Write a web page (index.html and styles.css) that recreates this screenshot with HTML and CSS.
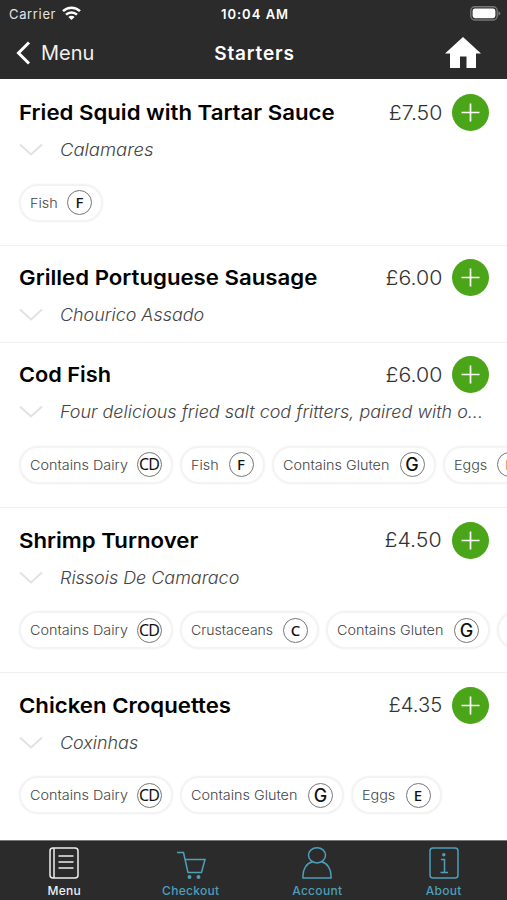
FILE: index.html
```html
<!DOCTYPE html>
<html lang="en">
<head>
<meta charset="utf-8">
<title>Starters</title>
<link rel="stylesheet" href="styles.css">
</head>
<body>
<svg class="defs" aria-hidden="true">
  <symbol id="plus" viewBox="0 0 37 37"><path d="M18.5 9.5v18M9.5 18.5h18" fill="none" stroke="#fff" stroke-width="1.7"/></symbol>
  <symbol id="chev" viewBox="0 0 24 14"><path d="M1 1.5 12 11.5 23 1.5" fill="none" stroke="#e2e2e2" stroke-width="2"/></symbol>
</svg>
<div class="app">
  <header>
    <div class="status">
      <div class="carrier"><span>Carrier</span>
        <svg width="19" height="15" viewBox="0 0 19 15" fill="none" stroke="#fff" stroke-width="2.5"><path d="M1 5.2a12.2 12.2 0 0 1 17 0M4 8.7a7.9 7.9 0 0 1 11 0"/><path d="M9.500 14 6.400 11a4.400 4.400 0 0 1 6.200 0z" fill="#fff" stroke="none"/></svg>
      </div>
      <div class="clock">10:04 AM</div>
      <svg class="battery" width="31" height="15" viewBox="0 0 31 15"><rect x=".8" y=".8" width="26.4" height="13.2" rx="4" fill="none" stroke="#777" stroke-width="1.4"/><rect x="2.6" y="2.6" width="22.8" height="9.6" rx="2.4" fill="#fff"/><path d="M28.4 5.2q2 .7 2 2.2t-2 2.2z" fill="#777"/></svg>
    </div>
    <div class="nav">
      <div class="back"><svg width="15" height="24" viewBox="0 0 15 24"><path d="M13 1.5 2.5 12 13 22.5" fill="none" stroke="#fff" stroke-width="3"/></svg><span>Menu</span></div>
      <h1>Starters</h1>
      <svg class="home" width="36" height="31" viewBox="0 0 36 31"><path d="M18 0 36 16.4H31V31H21.500V19.500H15V31H5V16.400H0z" fill="#fff"/></svg>
    </div>
  </header>
  <main>
    <section class="item">
      <div class="top"><h2>Fried Squid with Tartar Sauce</h2><span class="price">£7.50</span><svg class="add"><use href="#plus"/></svg></div>
      <div class="sub"><svg><use href="#chev"/></svg><i class="wide">Calamares</i></div>
      <div class="chips"><div class="chip fish"><span>Fish</span><b>F</b></div></div>
    </section>
    <section class="item short">
      <div class="top"><h2>Grilled Portuguese Sausage</h2><span class="price">£6.00</span><svg class="add"><use href="#plus"/></svg></div>
      <div class="sub"><svg><use href="#chev"/></svg><i>Chourico Assado</i></div>
    </section>
    <section class="item">
      <div class="top"><h2 class="cod">Cod Fish</h2><span class="price">£6.00</span><svg class="add"><use href="#plus"/></svg></div>
      <div class="sub"><svg><use href="#chev"/></svg><i>Four delicious fried salt cod fritters, paired with o...</i></div>
      <div class="chips"><div class="chip dairy"><span>Contains Dairy</span><b class="duo">CD</b></div><div class="chip fish"><span>Fish</span><b>F</b></div><div class="chip gluten"><span>Contains Gluten</span><b class="bold">G</b></div><div class="chip eggs"><span>Eggs</span><b>E</b></div></div>
    </section>
    <section class="item">
      <div class="top"><h2>Shrimp Turnover</h2><span class="price">£4.50</span><svg class="add"><use href="#plus"/></svg></div>
      <div class="sub"><svg><use href="#chev"/></svg><i>Rissois De Camaraco</i></div>
      <div class="chips"><div class="chip dairy"><span>Contains Dairy</span><b class="duo">CD</b></div><div class="chip crust"><span>Crustaceans</span><b>C</b></div><div class="chip gluten"><span>Contains Gluten</span><b class="bold">G</b></div><div class="chip eggs"></div></div>
    </section>
    <section class="item">
      <div class="top"><h2>Chicken Croquettes</h2><span class="price narrow">£4.35</span><svg class="add"><use href="#plus"/></svg></div>
      <div class="sub"><svg><use href="#chev"/></svg><i>Coxinhas</i></div>
      <div class="chips"><div class="chip dairy"><span>Contains Dairy</span><b class="duo">CD</b></div><div class="chip gluten"><span>Contains Gluten</span><b class="bold">G</b></div><div class="chip eggs"><span>Eggs</span><b>E</b></div></div>
    </section>
  </main>
  <footer>
    <div class="tab active"><svg viewBox="0 0 32 34"><rect x="2" y="2" width="28" height="30" rx="3"/><path d="M6 2v30M10.500 10h15M10.500 16h15M10.500 22h15"/></svg><span>Menu</span></div>
    <div class="tab"><svg viewBox="0 0 32 34"><path d="M2 6.500h6.500l4.500 20h13.500l3.500-13H10"/><circle cx="14.500" cy="31" r="1.200" fill="currentColor"/><circle cx="23.500" cy="31" r="1.200" fill="currentColor"/></svg><span>Checkout</span></div>
    <div class="tab"><svg viewBox="0 0 32 34"><ellipse cx="16" cy="9.300" rx="8.500" ry="7.600"/><path d="M11.500 15.800C5 17.500 2 23.500 2 29.500V32H30V29.500C30 23.500 27 17.500 20.500 15.800"/></svg><span>Account</span></div>
    <div class="tab"><svg viewBox="0 0 32 34"><rect x="2" y="2" width="28" height="30" rx="3"/><path d="M13 13.500h3.500V26M12.500 26.500h7.500"/><circle cx="15.800" cy="8.700" r="1" fill="currentColor"/></svg><span>About</span></div>
  </footer>
</div>
</body>
</html>
```
FILE: styles.css
```css
* { box-sizing: border-box; }
body { margin: 0; font-family: Inter, "Liberation Sans", sans-serif; background: #fff; }
.defs { position: absolute; width: 0; height: 0; }
.app { width: 507px; height: 900px; overflow: hidden; display: flex; flex-direction: column; }
header { height: 79px; background: #2b2b2b; color: #fff; flex: none; }
.status { height: 28px; display: grid; grid-template-columns: 1fr auto 1fr; align-items: center; padding: 0 6px 0 9px; font-size: 13px; }
.carrier { display: flex; align-items: center; gap: 6px; color: #e4e4e4; letter-spacing: .65px; }
.carrier svg { margin-top: -2px; }
.clock { font-weight: 600; letter-spacing: 1px; }
.battery { justify-self: end; margin-top: -1px; }
.nav { height: 49px; display: grid; grid-template-columns: 1fr auto 1fr; align-items: center; padding: 0 26px 0 16px; }
.back { display: flex; align-items: center; gap: 10px; font-size: 20px; color: #f0f0f0; }
h1 { margin: 2px 0 0; font-size: 19px; font-weight: 600; letter-spacing: .85px; transform: translateX(6px); }
.home { justify-self: end; }
main { flex: 1; overflow: hidden; padding-top: 1.500px; }
.item { height: 165.300px; border-bottom: 1px solid #f0f0f0; padding: 13px 0 0 19px; overflow: hidden; }
.item.short { height: 97px; }
.item:last-child { border: 0; }
.top { height: 38px; display: flex; align-items: center; padding-right: 18px; }
/* Titles and captions are set slightly extended. */
h2 { margin: 0; flex: 1; font-size: 20.500px; font-weight: 600; color: #000; white-space: nowrap; transform: scaleX(1.083); transform-origin: left; }
h2.cod { transform: scaleX(1.06); }
.price { font-size: 20px; font-weight: 300; color: #333; margin-right: 10px; transform: scaleX(1.065); transform-origin: right; }
.price.narrow { transform: scaleX(1.01); }
.add { width: 37px; height: 37px; border-radius: 50%; background: #4aa518; }
.sub { height: 37px; display: flex; align-items: center; gap: 17px; font-size: 17px; font-weight: 300; color: #444; white-space: nowrap; }
.sub svg { width: 24px; height: 14px; flex: none; margin-left: -.5px; margin-right: .5px; }
.sub i { transform: scaleX(1.055); transform-origin: left; }
.sub i.wide { transform: scaleX(1.085); }
.chips { display: flex; gap: 7px; padding-top: 15px; margin-left: -.5px; }
.chip { flex: none; height: 38px; border: 2px solid #f3f3f3; border-radius: 19px; box-shadow: 0 0 2px #eee; padding: 0 9px; display: flex; align-items: center; justify-content: space-between; font-size: 13px; font-weight: 300; color: #444; white-space: nowrap; }
.chip span { transform: scaleX(1.105); transform-origin: left; }
.crust span { transform: scaleX(1.08); }
.chip b { width: 25px; height: 25px; border: 1px solid #777; border-radius: 50%; font: 500 15px/23px "Noto Sans", sans-serif; color: #111; display: flex; justify-content: center; }
.chip b.duo { font-weight: 400; font-size: 16px; letter-spacing: -1px; padding-right: 1px; }
.chip b.bold { font: 500 18px/24px Inter, sans-serif; }
.fish { width: 84.500px; }
.dairy { width: 154.500px; }
.gluten { width: 164px; }
.crust { width: 139px; }
.eggs { width: 90.500px; }
footer { height: 60px; flex: none; background: #2b2b2b; border-top: 1px solid #777; display: grid; grid-template-columns: repeat(4, 1fr); padding-left: 1px; }
.tab { color: #4d9fba; display: flex; flex-direction: column; align-items: center; padding-top: 5px; font-size: 12px; font-weight: 500; letter-spacing: .3px; line-height: 16px; }
.tab.active { color: #eee; }
.tab svg { width: 32px; height: 34px; fill: none; stroke: currentColor; stroke-width: 1.500; margin-bottom: 3px; }
```
